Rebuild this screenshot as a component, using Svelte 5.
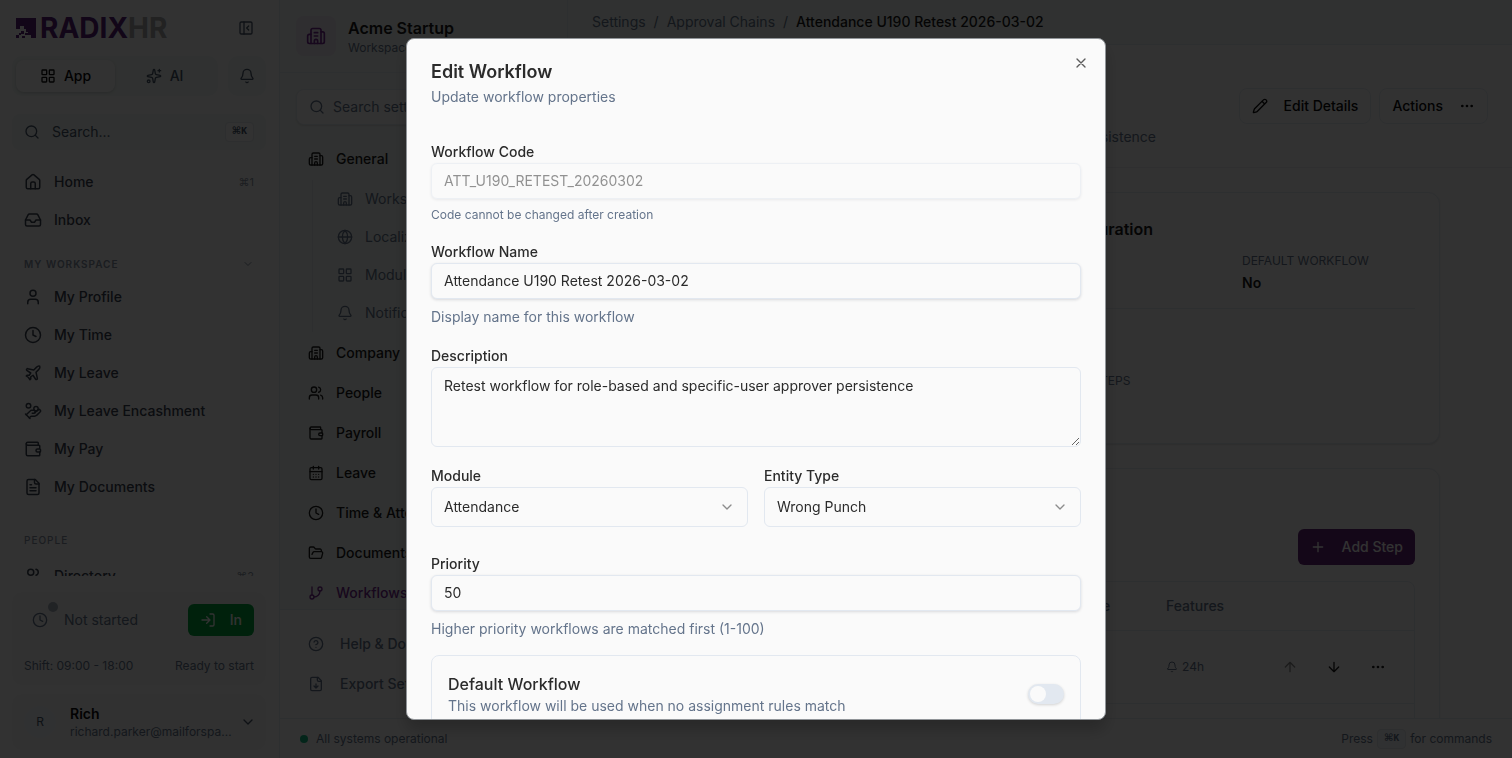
<script>
  const icons = {
    building: '<path d="M10 12h4M10 8h4M14 21v-3a2 2 0 0 0-4 0v3"/><path d="M6 10H4a2 2 0 0 0-2 2v7a2 2 0 0 0 2 2h16a2 2 0 0 0 2-2V9a2 2 0 0 0-2-2h-2"/><path d="M6 21V5a2 2 0 0 1 2-2h8a2 2 0 0 1 2 2v16"/>',
    panel: '<rect width="18" height="18" x="3" y="3" rx="2"/><path d="M9 3v18M16 15l-3-3 3-3"/>',
    grid: '<rect width="7" height="7" x="3" y="3" rx="1"/><rect width="7" height="7" x="14" y="3" rx="1"/><rect width="7" height="7" x="14" y="14" rx="1"/><rect width="7" height="7" x="3" y="14" rx="1"/>',
    sparkles: '<path d="M11.017 2.814a1 1 0 0 1 1.966 0l1.051 5.558a2 2 0 0 0 1.594 1.594l5.558 1.051a1 1 0 0 1 0 1.966l-5.558 1.051a2 2 0 0 0-1.594 1.594l-1.051 5.558a1 1 0 0 1-1.966 0l-1.051-5.558a2 2 0 0 0-1.594-1.594l-5.558-1.051a1 1 0 0 1 0-1.966l5.558-1.051a2 2 0 0 0 1.594-1.594z"/><path d="M20 2v4M22 4h-4"/><circle cx="4" cy="20" r="2"/>',
    bell: '<path d="M10.268 21a2 2 0 0 0 3.464 0"/><path d="M3.262 15.326A1 1 0 0 0 4 17h16a1 1 0 0 0 .74-1.673C19.41 13.956 18 12.499 18 8A6 6 0 0 0 6 8c0 4.499-1.411 5.956-2.738 7.326"/>',
    search: '<circle cx="11" cy="11" r="8"/><path d="m21 21-4.3-4.3"/>',
    home: '<path d="M15 21v-7a2 2 0 0 0-2-2h-2a2 2 0 0 0-2 2v7"/><path d="M3 10a2 2 0 0 1 .709-1.528l7-5.999a2 2 0 0 1 2.582 0l7 5.999A2 2 0 0 1 21 10v9a2 2 0 0 1-2 2H5a2 2 0 0 1-2-2z"/>',
    inbox: '<path d="M22 12h-6l-2 3h-4l-2-3H2"/><path d="M5.45 5.11 2 12v6a2 2 0 0 0 2 2h16a2 2 0 0 0 2-2v-6l-3.45-6.89A2 2 0 0 0 16.76 4H7.24a2 2 0 0 0-1.79 1.11z"/>',
    chevron: '<path d="m6 9 6 6 6-6"/>',
    user: '<path d="M19 21v-2a4 4 0 0 0-4-4H9a4 4 0 0 0-4 4v2"/><circle cx="12" cy="7" r="4"/>',
    users: '<path d="M16 21v-2a4 4 0 0 0-4-4H6a4 4 0 0 0-4 4v2"/><circle cx="9" cy="7" r="4"/><path d="M22 21v-2a4 4 0 0 0-3-3.87M16 3.13a4 4 0 0 1 0 7.75"/>',
    clock: '<circle cx="12" cy="12" r="10"/><path d="M12 6v6l4 2"/>',
    plane: '<path d="M17.8 19.2 16 11l3.5-3.5C21 6 21.5 4 21 3c-1-.5-3 0-4.5 1.5L13 8 4.8 6.2c-.5-.1-.9.1-1.1.5l-.3.5c-.2.5-.1 1 .3 1.3L9 12l-2 3H4l-1 1 3 2 2 3 1-1v-3l3-2 3.5 5.3c.3.4.8.5 1.3.3l.5-.2c.4-.3.6-.7.5-1.2z"/>',
    coins: '<path d="M11 15h2a2 2 0 1 0 0-4h-3c-.6 0-1.1.2-1.4.6L3 17"/><path d="m7 21 1.6-1.4c.3-.4.8-.6 1.4-.6h4c1.1 0 2.1-.4 2.8-1.2l4.6-4.4a2 2 0 0 0-2.75-2.91l-4.2 3.9"/><path d="m2 16 6 6"/><circle cx="16" cy="9" r="2.9"/><circle cx="6" cy="5" r="3"/>',
    wallet: '<path d="M19 7V4a1 1 0 0 0-1-1H5a2 2 0 0 0 0 4h15a1 1 0 0 1 1 1v4h-3a2 2 0 0 0 0 4h3a1 1 0 0 0 1-1v-2a1 1 0 0 0-1-1"/><path d="M3 5v14a2 2 0 0 0 2 2h15a1 1 0 0 0 1-1v-4"/>',
    file: '<path d="M15 2H6a2 2 0 0 0-2 2v16a2 2 0 0 0 2 2h12a2 2 0 0 0 2-2V7Z"/><path d="M14 2v4a2 2 0 0 0 2 2h4M10 9H8M16 13H8M16 17H8"/>',
    download: '<path d="M15 2H6a2 2 0 0 0-2 2v16a2 2 0 0 0 2 2h12a2 2 0 0 0 2-2V7Z"/><path d="M14 2v4a2 2 0 0 0 2 2h4M12 18v-6M9 15l3 3 3-3"/>',
    login: '<path d="M15 3h4a2 2 0 0 1 2 2v14a2 2 0 0 1-2 2h-4M10 17l5-5-5-5M15 12H3"/>',
    globe: '<circle cx="12" cy="12" r="10"/><path d="M12 2a14.5 14.5 0 0 0 0 20 14.5 14.5 0 0 0 0-20M2 12h20"/>',
    calendar: '<path d="M8 2v4M16 2v4"/><rect width="18" height="18" x="3" y="4" rx="2"/><path d="M3 10h18M8 14h.01M12 14h.01M16 14h.01M8 18h.01M12 18h.01M16 18h.01"/>',
    folder: '<path d="m6 14 1.5-2.9A2 2 0 0 1 9.24 10H20a2 2 0 0 1 1.94 2.5l-1.54 6a2 2 0 0 1-1.95 1.5H4a2 2 0 0 1-2-2V5a2 2 0 0 1 2-2h3.9a2 2 0 0 1 1.69.9l.81 1.2a2 2 0 0 0 1.67.9H18a2 2 0 0 1 2 2v2"/>',
    branch: '<path d="M6 3v12"/><circle cx="18" cy="6" r="3"/><circle cx="6" cy="18" r="3"/><path d="M18 9a9 9 0 0 1-9 9"/>',
    help: '<circle cx="12" cy="12" r="10"/><path d="M9.09 9a3 3 0 0 1 5.83 1c0 2-3 3-3 3M12 17h.01"/>',
    pencil: '<path d="M21.174 6.812a1 1 0 0 0-3.986-3.987L3.842 16.174a2 2 0 0 0-.5.83l-1.321 4.352a.5.5 0 0 0 .623.622l4.353-1.32a2 2 0 0 0 .83-.497zM15 5l4 4"/>',
    dots: '<g fill="currentColor"><circle cx="12" cy="12" r="1"/><circle cx="19" cy="12" r="1"/><circle cx="5" cy="12" r="1"/></g>',
    plus: '<path d="M5 12h14M12 5v14"/>',
    up: '<path d="m5 12 7-7 7 7M12 19V5"/>',
    down: '<path d="M12 5v14M19 12l-7 7-7-7"/>',
    close: '<path d="M18 6 6 18M6 6l12 12"/>'
  };
  const workspace = [
    ['user', 'My Profile'],
    ['clock', 'My Time'],
    ['plane', 'My Leave'],
    ['coins', 'My Leave Encashment'],
    ['wallet', 'My Pay'],
    ['file', 'My Documents']
  ];
  const general = [
    ['building', 'Workspace'],
    ['globe', 'Localization'],
    ['grid', 'Modules'],
    ['bell', 'Notifications']
  ];
  const sections = [
    ['building', 'Company'],
    ['users', 'People'],
    ['wallet', 'Payroll'],
    ['calendar', 'Leave'],
    ['clock', 'Time & Attendance'],
    ['folder', 'Documents'],
    ['branch', 'Workflows']
  ];
  let name = $state('Attendance U190 Retest 2026-03-02');
  let description = $state('Retest workflow for role-based and specific-user approver persistence');
  let priority = $state('50');
  let isDefault = $state(false);
</script>

{#snippet icon(id, size = 16)}
  <svg class="icon" width={size} height={size} viewBox="0 0 24 24" aria-hidden="true">{@html icons[id]}</svg>
{/snippet}

<div class="app">
  <aside class="sidebar">
    <div class="brand">
      <svg width="20" height="20" viewBox="0 0 20 20" aria-hidden="true">
        <path fill="#5c1f78" d="M0 0H20V20H15V17H12V14H10V11H8V8H4V11H0ZM5 13H8V16H5ZM0 17H3V20H0ZM3 15H5V17H3ZM9 15H12V17H9ZM6 18H9V20H6Z" />
      </svg>
      <span class="wordmark">RADIX<span>HR</span></span>
      <button class="bare" aria-label="Collapse sidebar">{@render icon('panel')}</button>
    </div>
    <div class="switcher">
      <div class="tabs">
        <button class="tab on">{@render icon('grid')}App</button>
        <button class="tab">{@render icon('sparkles')}AI</button>
      </div>
      <button class="bell" aria-label="Notifications">{@render icon('bell')}</button>
    </div>
    <button class="find">{@render icon('search')}<span>Search...</span><kbd>⌘K</kbd></button>
    <nav class="nav">
      <a href="#home">{@render icon('home', 18)}<span>Home</span><small>⌘1</small></a>
      <a href="#inbox">{@render icon('inbox', 18)}<span>Inbox</span></a>
      <div class="group">MY WORKSPACE {@render icon('chevron', 12)}</div>
      {#each workspace as [id, label]}
        <a href="#{id}">{@render icon(id, 18)}<span>{label}</span></a>
      {/each}
      <div class="group people">PEOPLE</div>
      <a href="#directory">{@render icon('users', 18)}<span>Directory</span><small>⌘2</small></a>
    </nav>
    <div class="shift">
      <div class="row">
        <span class="state">{@render icon('clock')}<i></i></span>
        <span class="grow">Not started</span>
        <button class="clockin">{@render icon('login')}In</button>
      </div>
      <div class="row meta"><span class="grow">Shift: 09:00 - 18:00</span><span>Ready to start</span></div>
    </div>
    <button class="profile">
      <span class="avatar">R</span>
      <span class="who"><b>Rich</b><span>richard.parker@mailforspa…</span></span>
      {@render icon('chevron')}
    </button>
  </aside>

  <div class="workspace">
    <div class="columns">
      <aside class="settings">
        <header>
          <span class="logo">{@render icon('building', 20)}</span>
          <div><h2>Acme Startup</h2><p>Workspace Settings</p></div>
        </header>
        <div class="tree">
          <label class="filter">{@render icon('search')}<input type="text" placeholder="Search settings..." aria-label="Search settings" /></label>
          <a class="item" href="#general">{@render icon('building')}General</a>
          <div class="subs">
            {#each general as [id, label]}
              <a href="#{label}">{@render icon(id)}{label}</a>
            {/each}
          </div>
          {#each sections as [id, label]}
            <a class="item" class:current={id === 'branch'} href="#{label}">{@render icon(id)}{label}</a>
          {/each}
        </div>
        <div class="extra">
          <a class="item" href="#help">{@render icon('help')}Help &amp; Documentation</a>
          <a class="item" href="#export">{@render icon('download')}Export Settings</a>
        </div>
      </aside>

      <main>
        <nav class="crumbs">
          <a href="#settings">Settings</a><span>/</span><a href="#chains">Approval Chains</a><span>/</span><b>Attendance U190 Retest 2026-03-02</b>
        </nav>
        <header class="pagehead">
          <div class="actions">
            <button class="outline">{@render icon('pencil')}Edit Details</button>
            <button class="outline">Actions{@render icon('dots')}</button>
          </div>
          <p>{description}</p>
        </header>
        <div class="content">
          <section class="card">
            <h3>Workflow Configuration</h3>
            <dl>
              <div><dt>MODULE</dt><dd>Attendance</dd></div>
              <div><dt>ENTITY</dt><dd>Wrong Punch</dd></div>
              <div><dt>PRIORITY</dt><dd>50</dd></div>
              <div><dt>DEFAULT WORKFLOW</dt><dd>No</dd></div>
            </dl>
            <dl class="stats">
              <div></div>
              <div></div>
              <div><dt>TOTAL STEPS</dt><dd>2</dd></div>
            </dl>
          </section>
          <section class="card steps">
            <button class="add">{@render icon('plus')}Add Step</button>
            <div class="tablebox">
              <table>
                <thead><tr><th>Step</th><th class="mode">Type</th><th class="feat">Features</th><th class="ops"></th></tr></thead>
                <tbody>
                  <tr>
                    <td>1</td><td></td>
                    <td><span class="remind">{@render icon('bell', 12)}24h</span></td>
                    <td>
                      <div class="opsrow">
                        <button class="bare faint" aria-label="Move up">{@render icon('up')}</button>
                        <button class="bare" aria-label="Move down">{@render icon('down')}</button>
                        <button class="bare" aria-label="More">{@render icon('dots')}</button>
                      </div>
                    </td>
                  </tr>
                  <tr><td></td><td></td><td></td><td></td></tr>
                </tbody>
              </table>
            </div>
          </section>
        </div>
      </main>
    </div>
    <footer class="status">
      <i></i><span class="grow">All systems operational</span>
      <span>Press</span><kbd>⌘K</kbd><span>for commands</span>
    </footer>
  </div>
</div>

<div class="overlay">
  <div class="dialog" role="dialog" aria-modal="true" aria-labelledby="dlg-title">
    <button class="x" aria-label="Close">{@render icon('close')}</button>
    <h1 id="dlg-title">Edit Workflow</h1>
    <p class="lead">Update workflow properties</p>
    <form>
      <div class="field">
        <label for="code">Workflow Code</label>
        <input id="code" type="text" value="ATT_U190_RETEST_20260302" disabled />
        <p class="hint small">Code cannot be changed after creation</p>
      </div>
      <div class="field">
        <label for="name">Workflow Name</label>
        <input id="name" type="text" bind:value={name} />
        <p class="hint">Display name for this workflow</p>
      </div>
      <div class="field">
        <label for="desc">Description</label>
        <textarea id="desc" bind:value={description}></textarea>
      </div>
      <div class="pair">
        <div class="field">
          <label for="module">Module</label>
          <div class="select">
            <select id="module"><option>Attendance</option></select>
            {@render icon('chevron')}
          </div>
        </div>
        <div class="field">
          <label for="entity">Entity Type</label>
          <div class="select">
            <select id="entity"><option>Wrong Punch</option></select>
            {@render icon('chevron')}
          </div>
        </div>
      </div>
      <div class="field">
        <label for="priority">Priority</label>
        <input id="priority" type="text" inputmode="numeric" bind:value={priority} />
        <p class="hint">Higher priority workflows are matched first (1-100)</p>
      </div>
      <div class="toggle">
        <label for="default"><b>Default Workflow</b><span>This workflow will be used when no assignment rules match</span></label>
        <input id="default" type="checkbox" role="switch" bind:checked={isDefault} />
      </div>
    </form>
  </div>
</div>

<style>
  :global(body) {
    margin: 0;
    background: #fafafa;
    font-family: Inter, 'Liberation Sans', sans-serif;
    font-size: 14px;
    line-height: 20px;
    color: #1a1a1a;
  }
  :global(*) { box-sizing: border-box; }
  button, input, select, textarea { font: inherit; color: inherit; }
  button { border: 0; background: none; padding: 0; display: flex; align-items: center; }
  a { color: inherit; text-decoration: none; }
  h1, h2, h3, p, dl, dd { margin: 0; }
  .icon {
    flex: none;
    display: block;
    fill: none;
    stroke: currentColor;
    stroke-width: 2;
    stroke-linecap: round;
    stroke-linejoin: round;
  }
  .grow { flex: 1; }
  kbd {
    font: 700 10px/18px 'Liberation Mono', 'DejaVu Sans', monospace;
    padding: 0 6px;
    border: 1px solid #dfe3e8;
    border-radius: 4px;
  }

  .app { display: flex; height: 100vh; overflow: hidden; }

  .sidebar {
    flex: none;
    width: 280px;
    display: flex;
    flex-direction: column;
    border-right: 1px solid #e2e8f0;
    padding: 12px 13px 8px 12px;
    color: #475569;
  }
  .brand { display: flex; align-items: center; height: 32px; padding: 0 12px 0 4px; gap: 4px; }
  .wordmark { flex: 1; font-size: 28px; line-height: 32px; font-weight: 700; color: #5c1f78; }
  .wordmark span { color: #a8a8a8; }
  .switcher { display: flex; gap: 10px; margin-top: 12px; }
  .tabs { flex: 1; display: flex; padding: 4px; background: #eef4f2; border-radius: 10px; }
  .tab { flex: 1; height: 32px; justify-content: center; gap: 8px; border-radius: 8px; font-weight: 500; }
  .on { background: #fafafa; color: #0a0a0a; box-shadow: 0 1px 3px rgba(0, 0, 0, 0.15); }
  .bell { width: 38px; justify-content: center; background: #eef4f2; border-radius: 10px; }
  .find { height: 36px; margin-top: 18px; padding: 0 12px; gap: 12px; background: #eef4f2; border-radius: 8px; }
  .find span { flex: 1; text-align: left; }
  .find kbd { background: #fafafa; }
  .nav { flex: 1; min-height: 0; overflow: hidden; margin-top: 13px; display: flex; flex-direction: column; }
  .nav a { flex: none; height: 38px; display: flex; align-items: center; gap: 12px; padding: 0 12px; font-weight: 500; color: #3a4250; }
  .nav a span { flex: 1; }
  .nav small { font-size: 11px; font-weight: 400; color: #8a94a3; }
  .group { flex: none; display: flex; align-items: center; justify-content: space-between; height: 39px; padding: 10px 12px 0; font-size: 10px; font-weight: 600; letter-spacing: 1px; color: #8590a2; }
  .people { height: 51px; padding-top: 16px; font-weight: 500; }
  .shift { margin-top: 16px; padding: 12px 12px 11px; height: 93px; background: #f5f5f5; border-radius: 10px; display: flex; flex-direction: column; justify-content: space-between; }
  .row { display: flex; align-items: center; color: #64748b; }
  .state { position: relative; width: 40px; padding-left: 8px; }
  .state i { position: absolute; left: 24px; top: -10px; width: 10px; height: 10px; border-radius: 50%; background: #a3adba; }
  .meta { font-size: 12px; line-height: 16px; }
  .clockin { height: 32px; padding: 0 12px; gap: 14px; border-radius: 6px; background: #00a63e; color: #fafafa; font-weight: 500; }
  .profile { margin-top: 9px; height: 56px; padding: 0 10px 0 12px; background: #f5f5f5; border-radius: 10px; text-align: left; }
  .avatar { flex: none; width: 32px; height: 32px; margin-right: 14px; line-height: 32px; border-radius: 50%; background: #f1f5f9; text-align: center; font-size: 12px; }
  .who { flex: 1; min-width: 0; font-size: 12px; line-height: 16px; white-space: nowrap; color: #64748b; }
  .who b { display: block; font-size: 14px; line-height: 20px; font-weight: 600; color: #0a0a0a; }

  .workspace { flex: 1; min-width: 0; display: flex; flex-direction: column; }
  .columns { flex: 1; min-height: 0; display: flex; }
  .settings { flex: none; width: 288px; display: flex; flex-direction: column; background: #f0f5f3; border-right: 1px solid #e2e8f0; }
  .settings header { flex: none; display: flex; gap: 12px; height: 73px; padding: 16px; border-bottom: 1px solid #e2e8f0; }
  .logo { display: grid; place-items: center; width: 40px; height: 40px; border-radius: 8px; background: #eae4f0; color: #75288f; }
  h2 { font-size: 16px; line-height: 24px; font-weight: 600; }
  .settings p { font-size: 12px; line-height: 16px; color: #64748b; }
  .tree { flex: 1; min-height: 0; overflow: hidden; padding: 16px 16px 0; }
  .filter { display: flex; align-items: center; gap: 8px; height: 36px; margin-bottom: 14px; padding: 0 12px; border: 1px solid #e2e8f0; border-radius: 8px; background: #fafafa; color: #64748b; box-shadow: 0 1px 2px rgba(0, 0, 0, 0.1); }
  .filter input { flex: 1; min-width: 0; border: 0; padding: 0; background: none; outline: 0; }
  .filter input::placeholder { color: #64748b; }
  .item { display: flex; align-items: center; gap: 12px; height: 40px; padding: 0 12px; font-weight: 500; }
  .current { color: #75288f; }
  .subs { margin: 1px 0 1px 16px; padding-left: 24px; border-left: 1px solid #dfe4e8; }
  .subs a { display: flex; align-items: center; gap: 12px; height: 38px; color: #64748b; }
  .extra { flex: none; padding: 14px 16px; border-top: 1px solid #e2e8f0; background: #fafafa; }
  .extra .item { gap: 16px; color: #64748b; }

  main { flex: 1; min-width: 0; overflow: hidden; }
  .crumbs { display: flex; gap: 8px; height: 45px; padding: 12px 24px; background: #eff5f2; border-bottom: 1px solid #e2e8f0; color: #64748b; }
  .crumbs b { font-weight: 500; color: #1a1a1a; }
  .pagehead { height: 123px; padding: 43px 24px 0; border-bottom: 1px solid #e8ebef; }
  .pagehead p { margin-top: 3px; padding-right: 332px; text-align: right; white-space: nowrap; color: #64748b; }
  .actions { display: flex; justify-content: flex-end; gap: 8px; }
  .outline { height: 36px; padding: 0 12px; gap: 16px; border: 1px solid #e2e8f0; border-radius: 8px; font-weight: 500; color: #0a0a0a; }
  .content { min-height: 600px; padding: 24px 72px 0 58px; background: #f8f8f8; }
  .card { height: 252px; padding: 24px; border: 1px solid #e2e8f0; border-radius: 12px; background: #fafafa; box-shadow: 0 1px 2px rgba(0, 0, 0, 0.1); }
  h3 { padding-right: 262px; text-align: right; font-size: 16px; line-height: 24px; font-weight: 600; }
  dl { display: grid; grid-template-columns: repeat(4, 1fr); gap: 24px; margin-top: 12px; padding-bottom: 15px; border-bottom: 1px solid #e2e8f0; }
  dt { font-size: 12px; line-height: 16px; white-space: nowrap; color: #64748b; }
  dd { margin-top: 4px; font-weight: 600; }
  .stats { margin-top: 64px; border: 0; padding: 0 0 0 12px; }
  .steps { height: 400px; margin-top: 24px; padding-top: 60px; }
  .add { height: 36px; margin-left: auto; padding: 0 12px; gap: 16px; border-radius: 6px; background: #642478; color: #fafafa; font-weight: 500; }
  .tablebox { margin-top: 16px; border: 1px solid #e2e8f0; border-radius: 8px; }
  table { width: 100%; border-collapse: collapse; table-layout: fixed; }
  th { height: 48px; padding: 0 16px; text-align: left; font-weight: 500; color: #64748b; }
  td { height: 73px; padding: 0 16px; border-top: 1px solid #e2e8f0; }
  .mode { width: 89px; }
  .feat { width: 116px; }
  .ops { width: 148px; }
  .remind { display: flex; align-items: center; gap: 4px; font-size: 12px; color: #64748b; }
  .opsrow { display: flex; gap: 28px; }
  .faint { opacity: 0.5; }
  .status { flex: none; display: flex; align-items: center; gap: 4px; height: 40px; padding: 0 20px 0 16px; border-top: 1px solid #e2e8f0; font-size: 12px; color: #64748b; }
  .status i { width: 8px; height: 8px; margin: 0 4px; border-radius: 50%; background: #10b981; }
  .status kbd { background: #f1f5f9; }

  .overlay { position: fixed; inset: 0; display: flex; align-items: center; justify-content: center; background: rgba(0, 0, 0, 0.8); }
  .dialog {
    position: relative;
    width: 700px;
    max-width: 100%;
    max-height: 90vh;
    overflow: hidden;
    padding: 24px;
    border: 1px solid #909498;
    border-radius: 8px;
    background: #fafafa;
    box-shadow: 0 10px 16px rgba(0, 0, 0, 0.2);
    color: #2b2b2b;
  }
  .x { position: absolute; top: 16px; right: 16px; color: #5c5c5c; }
  h1 { font-size: 18px; line-height: 18px; font-weight: 600; }
  .lead { margin-top: 6px; color: #64748b; }
  form { margin-top: 34px; display: flex; flex-direction: column; gap: 18px; }
  .field { display: flex; flex-direction: column; }
  .field label { line-height: 22px; font-weight: 500; }
  .field input, textarea, select { width: 100%; padding: 0 12px; border: 1px solid #e2e8f0; border-radius: 6px; background: #fafafa; outline: 0; }
  .field input { height: 36px; box-shadow: 0 1px 3px rgba(15, 23, 42, 0.14); }
  .field input:disabled { opacity: 0.5; }
  textarea { display: block; height: 80px; padding-top: 8px; resize: vertical; }
  .hint { margin-top: 8px; color: #64748b; }
  .small { font-size: 12px; line-height: 16px; }
  .pair { display: grid; grid-template-columns: 1fr 1fr; gap: 16px; margin-bottom: 8px; }
  .select { display: grid; align-items: center; }
  .select select { grid-area: 1 / 1; height: 40px; appearance: none; }
  .select .icon { grid-area: 1 / 1; justify-self: end; margin-right: 13px; color: #8c8c8c; pointer-events: none; }
  .toggle { display: flex; align-items: center; justify-content: space-between; margin-top: -2px; padding: 16px; border: 1px solid #e2e8f0; border-radius: 8px; }
  .toggle b { display: block; font-size: 16px; line-height: 24px; font-weight: 500; }
  .toggle span { color: #64748b; }
  .toggle input { appearance: none; width: 36px; height: 20px; margin: 0; padding: 2px; border-radius: 10px; background: #e2e8f0; box-shadow: 0 1px 3px rgba(0, 0, 0, 0.16); }
  .toggle input::before { content: ''; display: block; width: 16px; height: 16px; border-radius: 50%; background: #fafafa; }
  .toggle input:checked { background: #82309f; padding-left: 18px; }
</style>
